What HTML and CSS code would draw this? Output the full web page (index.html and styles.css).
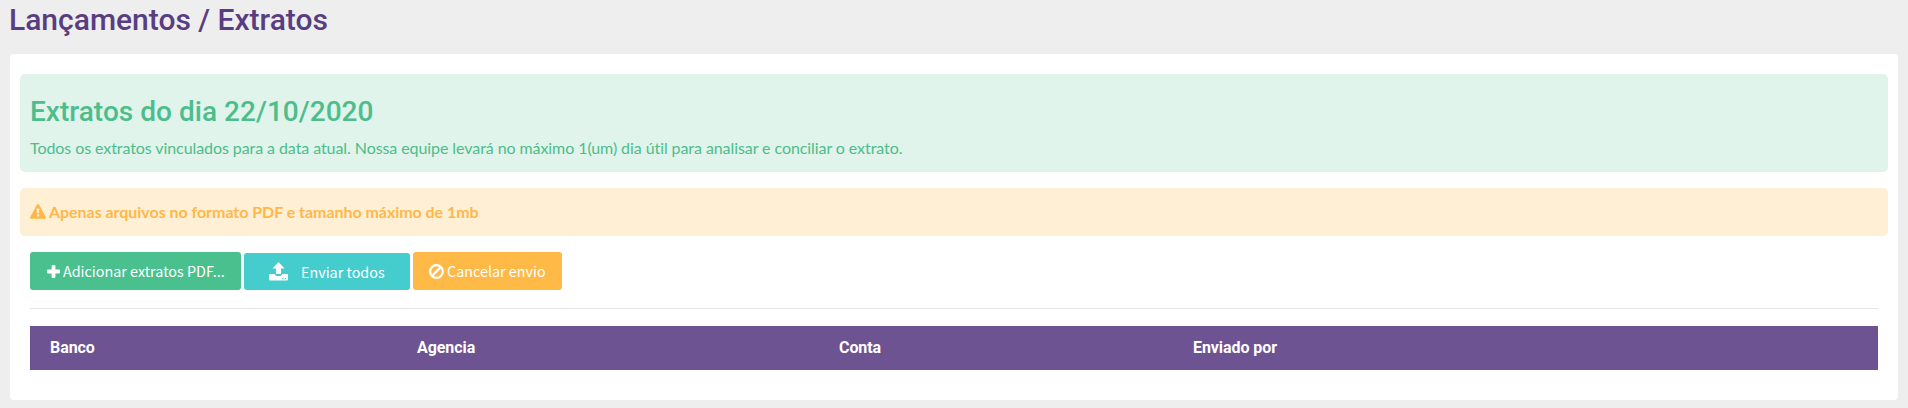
FILE: index.html
```
<!DOCTYPE html>
<html lang="pt-BR">
<head>
<meta charset="utf-8">
<title>Lançamentos / Extratos</title>
<link rel="stylesheet" href="styles.css">
</head>
<body>
<h1 class="page-title"><span>Lançamentos / Extratos</span></h1>
<main class="card">
  <section class="alert alert-success">
    <h2 class="alert-title"><span>Extratos do dia 22/10/2020</span></h2>
    <p class="alert-text"><span>Todos os extratos vinculados para a data atual. Nossa equipe levará no máximo 1(um) dia útil para analisar e conciliar o extrato.</span></p>
  </section>
  <section class="alert alert-warning">
    <svg class="icon-warning" viewBox="0 0 1792 1792"><path fill="currentColor" d="M1024 1375v-190q0-14-9.500-23.500t-22.500-9.500h-192q-13 0-22.500 9.500t-9.500 23.500v190q0 14 9.500 23.500t22.500 9.500h192q13 0 22.500-9.500t9.500-23.500zm-2-374l18-459q0-12-10-19-13-11-24-11h-220q-11 0-24 11-10 7-10 21l17 457q0 10 10 16.500t24 6.500h185q14 0 23.500-6.500t10.500-16.500zm-14-934l768 1408q35 63-2 126-17 29-46.500 46t-63.500 17h-1536q-34 0-63.500-17t-46.500-46q-37-63-2-126l768-1408q17-31 47-49t65-18 65 18 47 49z"/></svg>
    <strong>Apenas arquivos no formato PDF e tamanho máximo de 1mb</strong>
  </section>
  <div class="content">
    <div class="toolbar">
      <button class="btn btn-add"><svg class="icon-plus" viewBox="0 0 13 13"><path fill="currentColor" d="M5.600 0h1.800q1 0 1 1v3.600H12q1 0 1 1v1.800q0 1-1 1H8.400V12q0 1-1 1H5.600q-1 0-1-1V8.400H1q-1 0-1-1V5.600q0-1 1-1h3.600V1q0-1 1-1z"/></svg><span>Adicionar extratos PDF...</span></button>
      <button class="btn btn-send"><svg class="icon-upload" viewBox="0 0 19 19"><path fill="currentColor" d="M9.500 0l6 6.500H12V12H7V6.500H3.500zM1 12h4.700q.6 2 2.300 2h3q1.700 0 2.300-2H18q1 0 1 1v4.500q0 1-1 1H1q-1 0-1-1V13q0-1 1-1zm12.300 3.900v1.100h1.300v-1.100zm2.500 0v1.100h1.300v-1.100z"/></svg><span>Enviar todos</span></button>
      <button class="btn btn-cancel"><svg class="icon-ban" viewBox="0 0 14 14"><g fill="none" stroke="currentColor" stroke-width="2.100"><circle cx="7" cy="7" r="5.900"/><path d="M2.900 11.100l8.200-8.200"/></g></svg><span>Cancelar envio</span></button>
    </div>
    <hr class="divider">
    <table class="statements">
      <colgroup><col class="col-bank"><col class="col-agency"><col class="col-account"><col></colgroup>
      <thead><tr><th>Banco</th><th>Agencia</th><th>Conta</th><th>Enviado por</th></tr></thead>
    </table>
  </div>
</main>
</body>
</html>
```
FILE: styles.css
```
* { box-sizing: border-box; }
body { margin: 0; background: #eeeeee; font: 16px/24px Lato, sans-serif; }
svg { display: block; flex: none; }
.page-title { margin: 0; padding: 2px 9px 0; height: 54px; font: 500 30px/36px Roboto, sans-serif; color: #593d81; }
.card { margin: 0 10px 8px; height: 346px; padding: 20px 10px; background: #fff; border-radius: 4px; }
.alert { margin-bottom: 16px; border-radius: 5px; padding: 12px 10px; }
.alert-success { height: 98px; padding-top: 20px; background: #e0f4eb; color: #4dbd8c; }
.alert-title { margin: 0 0 6px; font: 500 28px/36px Roboto, sans-serif; letter-spacing: .03px; }
.alert-text { margin: 0; letter-spacing: -.078px; }
.alert-warning { height: 48px; display: flex; align-items: center; gap: 3px; background: #ffefd4; color: #ffb848; letter-spacing: -.04px; }
.icon-warning { width: 16px; height: 16px; }
.content { padding: 0 10px; }
.toolbar { display: flex; align-items: flex-end; gap: 3px; height: 38px; }
.btn { display: flex; align-items: center; height: 38px; border: 0; border-radius: 3px; color: #fff; font: 14.35px/24px "Noto Sans CJK SC", sans-serif; white-space: nowrap; padding: 0 0 0 17px; }
.btn-add { width: 211px; gap: 3px; background: #4bc08f; }
.btn-send { width: 166px; height: 37px; gap: 13px; padding-left: 25px; background: #45cccd; }
.btn-cancel { width: 149px; gap: 3px; padding-left: 16px; background: #ffb946; }
.icon-plus { width: 13px; height: 13px; }
.icon-upload { width: 19px; height: 19px; }
.icon-ban { width: 15px; height: 15px; }
.divider { margin: 18px 0 17px; border: 0; height: 1px; background: #e4e4e4; }
.statements { width: 100%; table-layout: fixed; border-collapse: collapse; background: #6d5391; color: #fff; }
.statements th { height: 44px; padding: 0 20px; text-align: left; font: 700 16px/24px Roboto, sans-serif; letter-spacing: -.07px; }
.col-bank { width: 367px; }
.col-agency { width: 422px; }
.col-account { width: 354px; }
```
